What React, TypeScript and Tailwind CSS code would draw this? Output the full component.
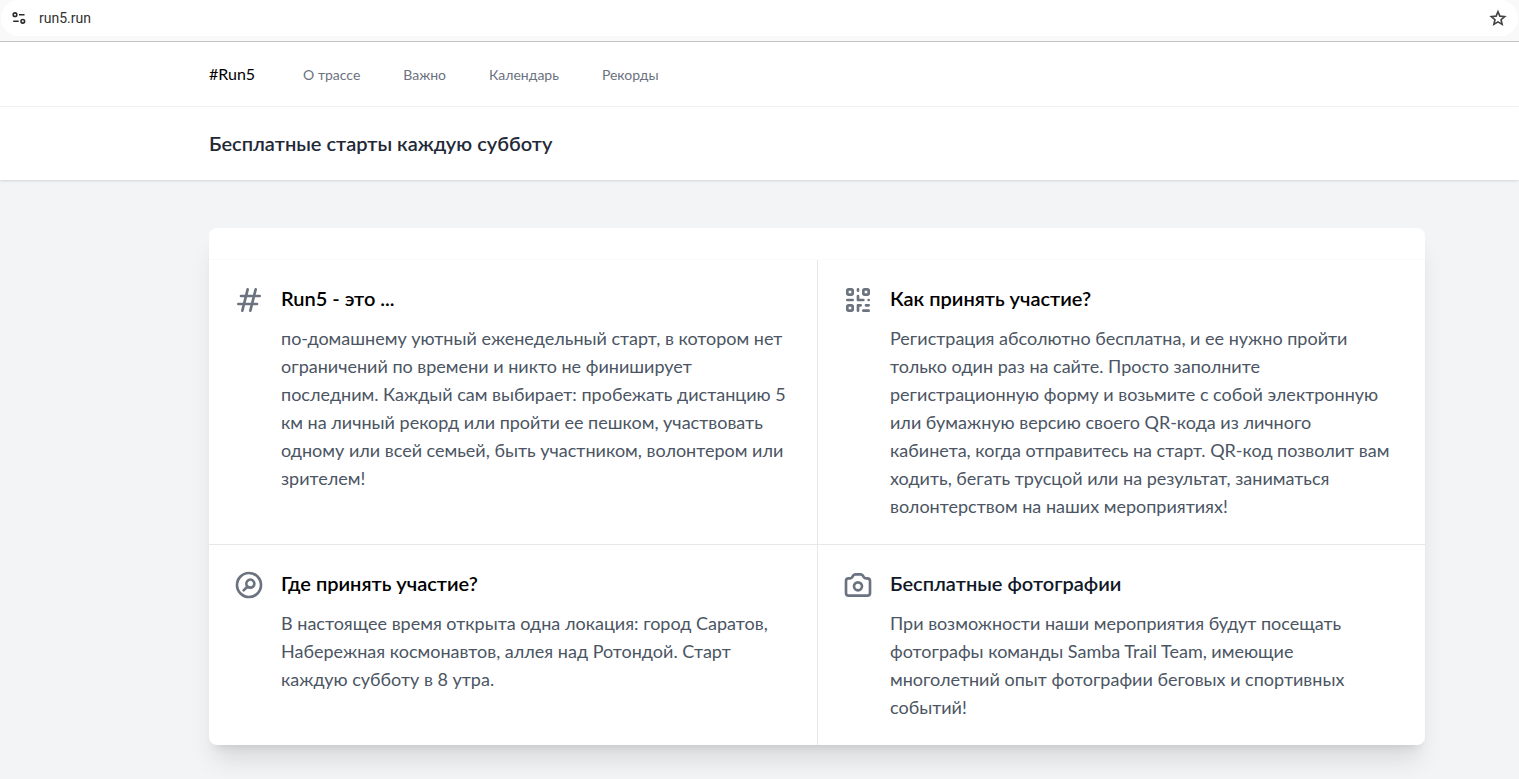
import type { ReactNode } from 'react';

const navLinks = ['О трассе', 'Важно', 'Календарь', 'Рекорды'];

type Feature = { title: string; tone: string; border: string; icon: ReactNode; lines: string[] };

const features: Feature[] = [
  {
    title: 'Run5 - это ...',
    tone: 'text-black',
    border: '',
    icon: <path d="M7 20l4-16m2 16l4-16M6 9h14M4 15h14" />,
    lines: [
      'по-домашнему уютный еженедельный старт, в котором нет',
      'ограничений по времени и никто не финиширует',
      'последним. Каждый сам выбирает: пробежать дистанцию 5',
      'км на личный рекорд или пройти ее пешком, участвовать',
      'одному или всей семьей, быть участником, волонтером или',
      'зрителем!',
    ],
  },
  {
    title: 'Как принять участие?',
    tone: 'text-black',
    border: 'border-l',
    icon: (
      <path d="M12 4v1m6 11h2m-6 0h-2v4m0-11v3m0 0h.01M12 12h4.01M16 20h4M4 12h4m12 0h.01M5 8h2a1 1 0 001-1V5a1 1 0 00-1-1H5a1 1 0 00-1 1v2a1 1 0 001 1zm12 0h2a1 1 0 001-1V5a1 1 0 00-1-1h-2a1 1 0 00-1 1v2a1 1 0 001 1zM5 20h2a1 1 0 001-1v-2a1 1 0 00-1-1H5a1 1 0 00-1 1v2a1 1 0 001 1z" />
    ),
    lines: [
      'Регистрация абсолютно бесплатна, и ее нужно пройти',
      'только один раз на сайте. Просто заполните',
      'регистрационную форму и возьмите с собой электронную',
      'или бумажную версию своего QR-кода из личного',
      'кабинета, когда отправитесь на старт. QR-код позволит вам',
      'ходить, бегать трусцой или на результат, заниматься',
      'волонтерством на наших мероприятиях!',
    ],
  },
  {
    title: 'Где принять участие?',
    tone: 'text-black',
    border: 'border-t',
    icon: (
      <path d="M8 16l2.879-2.879m0 0a3 3 0 104.243-4.242 3 3 0 00-4.243 4.242zM21 12a9 9 0 11-18 0 9 9 0 0118 0z" />
    ),
    lines: [
      'В настоящее время открыта одна локация: город Саратов,',
      'Набережная космонавтов, аллея над Ротондой. Старт',
      'каждую субботу в 8 утра.',
    ],
  },
  {
    title: 'Бесплатные фотографии',
    tone: 'text-gray-900',
    border: 'border-t border-l',
    icon: (
      <>
        <path d="M3 9a2 2 0 012-2h.93a2 2 0 001.664-.89l.812-1.22A2 2 0 0110.07 4h3.86a2 2 0 011.664.89l.812 1.22A2 2 0 0018.07 7H19a2 2 0 012 2v9a2 2 0 01-2 2H5a2 2 0 01-2-2V9z" />
        <path d="M15 13a3 3 0 11-6 0 3 3 0 016 0z" />
      </>
    ),
    lines: [
      'При возможности наши мероприятия будут посещать',
      'фотографы команды Samba Trail Team, имеющие',
      'многолетний опыт фотографии беговых и спортивных',
      'событий!',
    ],
  },
];

function AddressBar() {
  return (
    <div className="flex h-[42px] items-start border-b border-[#c4c4c4] bg-[#f9f9f9] px-px">
      <div className="flex h-9 grow items-center rounded-full bg-white pl-2 pr-2.5">
        <button type="button" aria-label="Сведения о сайте" className="flex size-5 items-center justify-center">
          <svg viewBox="0 0 14 14" className="size-3.5" fill="none" stroke="#2a2a2a" strokeWidth="1.6">
            <circle cx="3" cy="3.7" r="1.8" />
            <path d="M7 3.7h5.5M1.2 10.3h5.5" />
            <circle cx="10.8" cy="10.3" r="1.8" />
          </svg>
        </button>
        <input
          aria-label="Адрес"
          defaultValue="run5.run"
          className="ml-2.5 min-w-0 grow bg-transparent font-['Roboto',sans-serif] text-sm text-[#303030] outline-none"
        />
        <button type="button" aria-label="Добавить в закладки" className="flex size-5 items-center justify-center">
          <svg viewBox="0 0 24 24" className="size-[18px]" fill="none" stroke="#444" strokeWidth="2.2">
            <path d="M12 3.6l2.5 5.9 6.4.55-4.85 4.2 1.45 6.25L12 17.2l-5.5 3.3 1.45-6.25L3.1 10.05l6.4-.55z" />
          </svg>
        </button>
      </div>
    </div>
  );
}

export default function App() {
  return (
    <div className="min-h-screen bg-[#f3f4f6] font-['Lato','Noto_Sans',sans-serif]">
      <AddressBar />
      <nav className="border-b border-gray-100 bg-white pl-[209px] pr-[94px]">
        <div className="flex h-16 items-center">
          <a href="#home" className="text-base text-black">#Run5</a>
          <div className="ml-12 flex gap-[43px] pt-0.5">
            {navLinks.map((label) => (
              <a key={label} href="#section" className="text-sm text-[#6b7280]">{label}</a>
            ))}
          </div>
        </div>
      </nav>
      <header className="bg-white py-6 pl-[209px] pr-[94px] shadow">
        <h1 className="text-xl leading-tight font-semibold text-[#1f2937]">Бесплатные старты каждую субботу</h1>
      </header>
      <main className="py-12 pl-[209px] pr-[94px]">
        <div className="overflow-hidden rounded-lg bg-white shadow-xl">
          <div className="h-8 border-b border-gray-50" />
          <div className="grid grid-cols-2">
            {features.map((f) => (
              <section key={f.title} className={`border-gray-200 p-6 ${f.border}`}>
                <div className="flex items-start">
                  <svg
                    viewBox="0 0 24 24"
                    className="size-8 text-[#6b7280]"
                    fill="none"
                    stroke="currentColor"
                    strokeWidth="2"
                    strokeLinecap="round"
                    strokeLinejoin="round"
                  >
                    {f.icon}
                  </svg>
                  <h2 className={`ml-4 text-xl leading-7 font-semibold ${f.tone}`}>{f.title}</h2>
                </div>
                <p className="mt-2 ml-12 text-lg leading-7 whitespace-nowrap text-[#4b5563]">
                  {f.lines.map((line) => (
                    <span key={line} className="block">{line}</span>
                  ))}
                </p>
              </section>
            ))}
          </div>
        </div>
      </main>
    </div>
  );
}
